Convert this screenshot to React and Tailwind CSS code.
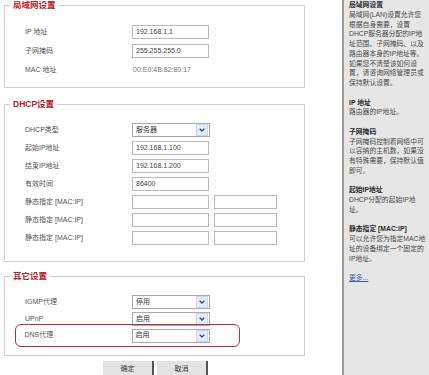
import React from 'react';

const font = "font-['Liberation_Sans','Noto_Sans_CJK_SC',sans-serif]";

const Input = ({ value, w = 'w-[77px]' }) => (
  <div className={`${w} h-[14px] border border-[#bcbcbc] bg-white flex items-center pl-[3px] text-[7px] text-[#444]`}>
    {value}
  </div>
);

const Select = ({ value }) => (
  <div className="w-[78px] h-[14px] border border-[#a9a9a9] bg-white flex items-center justify-between text-[7px] text-[#333]">
    <span className="pl-[3px]">{value}</span>
    <span className="w-[12px] h-[12px] mr-[1px] bg-[#e3ecf8] border border-[#cad8ec] flex items-center justify-center">
      <svg width="6" height="4" viewBox="0 0 6 4">
        <path d="M0.7 0.7 L3 3 L5.3 0.7" stroke="#2f4f8f" strokeWidth="1.3" fill="none" />
      </svg>
    </span>
  </div>
);

const Row = ({ label, children, labelW = 'w-[127px] pl-[20px]' }) => (
  <div className="flex items-center h-[14px]">
    <div className={`${labelW} text-[7px] text-[#555] whitespace-nowrap`}>{label}</div>
    {children}
  </div>
);

const Section = ({ title, children, className = '' }) => (
  <fieldset className={`ml-[4px] w-[301px] border border-[#d2d2d2] ${className}`}>
    <legend className="ml-[5px] px-[3px] text-[8.5px] leading-[10px] font-bold text-[#b5242a]">{title}</legend>
    {children}
  </fieldset>
);

const StaticRow = () => (
  <Row label="静态指定 [MAC:IP]">
    <Input value="" />
    <span className="w-[5px] text-center text-[6px] text-[#aaa]">:</span>
    <Input value="" w="w-[63px]" />
  </Row>
);

const help = [
  { t: '局域网设置', b: true },
  { t: '局域网(LAN)设置允许您' },
  { t: '根据自身需要，设置' },
  { t: 'DHCP服务器分配的IP地' },
  { t: '址范围、子网掩码、以及' },
  { t: '路由器本身的IP地址等。' },
  { t: '如果您不清楚该如何设' },
  { t: '置，请咨询网络管理员或' },
  { t: '保持默认设置。' },
  { t: '' },
  { t: 'IP 地址', b: true },
  { t: '路由器的IP地址。' },
  { t: '' },
  { t: '子网掩码', b: true },
  { t: '子网掩码控制着网络中可' },
  { t: '以容纳的主机数，如果没' },
  { t: '有特殊需要，保持默认值' },
  { t: '即可。' },
  { t: '' },
  { t: '起始IP地址', b: true },
  { t: 'DHCP分配的起始IP地' },
  { t: '址。' },
  { t: '' },
  { t: '静态指定 [MAC:IP]', b: true },
  { t: '可以允许您为指定MAC地' },
  { t: '址的设备绑定一个固定的' },
  { t: 'IP地址。' },
  { t: '' },
];

export default function App() {
  return (
    <div className={`w-[429px] h-[375px] overflow-hidden flex bg-white ${font}`}>
      {/* main form */}
      <div className="w-[342px] shrink-0">
        <Section title="局域网设置">
          <div className="pt-[15px] pb-[10px] flex flex-col gap-[5px]">
            <Row label="IP 地址"><Input value="192.168.1.1" /></Row>
            <Row label="子网掩码"><Input value="255.255.255.0" /></Row>
            <Row label="MAC 地址">
              <span className="text-[7px] text-[#777] pl-[1px]">00:E0:4B:82:80:17</span>
            </Row>
          </div>
        </Section>

        <Section title="DHCP设置" className="mt-[11px]">
          <div className="pt-[14px] pb-[16px] flex flex-col gap-[4px]">
            <Row label="DHCP类型"><Select value="服务器" /></Row>
            <Row label="起始IP地址"><Input value="192.168.1.100" /></Row>
            <Row label="结束IP地址"><Input value="192.168.1.200" /></Row>
            <Row label="有效时间"><Input value="86400" /></Row>
            <StaticRow />
            <StaticRow />
            <StaticRow />
          </div>
        </Section>

        <Section title="其它设置" className="mt-[9px]">
          <div className="pt-[14px] pb-[8px] flex flex-col">
            <Row label="IGMP代理"><Select value="停用" /></Row>
            <div className="mt-[3px]">
              <Row label="UPnP"><Select value="启用" /></Row>
            </div>
            <div className="mt-[-2px] ml-[10px] w-[225px] border-[1.5px] border-[#b3303a] rounded-[6px] py-[3.5px]">
              <Row label="DNS代理" labelW="w-[115.5px] pl-[8.5px]"><Select value="启用" /></Row>
            </div>
          </div>
        </Section>

        <div className="mt-[5px] pl-[103px] flex gap-[3px]">
          <button className="w-[51px] h-[16px] bg-[#e3e3e3] border-r-2 border-[#555] text-[7px] text-[#333]">确定</button>
          <button className="w-[51px] h-[16px] bg-[#e3e3e3] border-r-2 border-[#555] text-[7px] text-[#333]">取消</button>
        </div>
      </div>

      {/* help sidebar */}
      <div className="flex-1 bg-[#e6e6e6] border-l-2 border-[#9c9c9c] pl-[5px] text-[6.8px] leading-[9.75px] text-[#4a4a4a]">
        {help.map((l, i) => (
          <div key={i} className={`h-[9.75px] whitespace-nowrap ${l.b ? 'font-bold text-[#2a2a2a]' : ''}`}>{l.t}</div>
        ))}
        <div className="h-[9.75px] text-[#3b5aa8] underline">更多...</div>
      </div>
    </div>
  );
}
